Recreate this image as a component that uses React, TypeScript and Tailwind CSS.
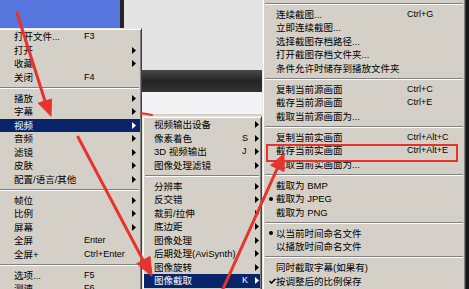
import React from "react"

type Item = {
  label?: string
  hotkey?: string
  sub?: boolean
  active?: boolean
  mark?: "dot" | "check"
  sep?: boolean
}

const mainMenu: Item[] = [
  { label: "打开文件...", hotkey: "F3" },
  { label: "打开", sub: true },
  { label: "收藏", sub: true },
  { label: "关闭", hotkey: "F4" },
  { sep: true },
  { label: "播放", sub: true },
  { label: "字幕", sub: true },
  { label: "视频", sub: true, active: true },
  { label: "音频", sub: true },
  { label: "滤镜", sub: true },
  { label: "皮肤", sub: true },
  { label: "配置/语言/其他", sub: true },
  { sep: true },
  { label: "帧位", sub: true },
  { label: "比例", sub: true },
  { label: "屏幕", sub: true },
  { label: "全屏", hotkey: "Enter" },
  { label: "全屏+", hotkey: "Ctrl+Enter" },
  { sep: true },
  { label: "选项...", hotkey: "F5" },
  { label: "测速", hotkey: "F6" },
]

const videoMenu: Item[] = [
  { label: "视频输出设备", sub: true },
  { label: "像素着色", hotkey: "S", sub: true },
  { label: "3D 视频输出", hotkey: "J", sub: true },
  { label: "图像处理滤镜", sub: true },
  { sep: true },
  { label: "分辨率", sub: true },
  { label: "反交错", sub: true },
  { label: "裁剪/拉伸", sub: true },
  { label: "底边距", sub: true },
  { label: "图像处理", sub: true },
  { label: "后期处理(AviSynth)", sub: true },
  { label: "图像旋转", sub: true },
  { label: "图像截取", hotkey: "K", sub: true, active: true },
]

const captureMenu: Item[] = [
  { sep: true },
  { label: "连续截图...", hotkey: "Ctrl+G" },
  { label: "立即连续截图..." },
  { label: "选择截图存档路径..." },
  { label: "打开截图存档文件夹..." },
  { label: "条件允许时储存到播放文件夹" },
  { sep: true },
  { label: "复制当前源画面", hotkey: "Ctrl+C" },
  { label: "截存当前源画面", hotkey: "Ctrl+E" },
  { label: "截取当前源画面为..." },
  { sep: true },
  { label: "复制当前实画面", hotkey: "Ctrl+Alt+C" },
  { label: "截存当前实画面", hotkey: "Ctrl+Alt+E" },
  { label: "截取当前实画面为..." },
  { sep: true },
  { label: "截取为 BMP" },
  { label: "截取为 JPEG", mark: "dot" },
  { label: "截取为 PNG" },
  { sep: true },
  { label: "以当前时间命名文件", mark: "dot" },
  { label: "以播放时间命名文件" },
  { sep: true },
  { label: "同时截取字幕(如果有)" },
  { label: "按调整后的比例保存", mark: "check" },
]

function Arrow({ white }: { white?: boolean }) {
  return (
    <svg width="4" height="7" viewBox="0 0 4 7" className="shrink-0">
      <path d="M0 0 L4 3.5 L0 7 Z" fill={white ? "#fff" : "#000"} />
    </svg>
  )
}

function Mark({ kind }: { kind?: "dot" | "check" }) {
  if (kind === "dot") return <span className="block w-[4px] h-[4px] rounded-full bg-black" />
  if (kind === "check")
    return (
      <svg width="7" height="6" viewBox="0 0 7 6">
        <path d="M0.5 3 L2.5 5 L6.5 0.8" stroke="#000" strokeWidth="1.5" fill="none" />
      </svg>
    )
  return null
}

function Menu({
  items,
  className,
  padL,
  markW,
  labelW,
  keyW,
}: {
  items: Item[]
  className: string
  padL: string
  markW: string
  labelW: string
  keyW: string
}) {
  return (
    <div
      className={`absolute bg-[#d4d0c8] border border-t-[#e8e6e0] border-l-[#e8e6e0] border-r-[#404040] border-b-[#404040] shadow-[inset_1px_1px_0_#fff,inset_-1px_-1px_0_#808080] p-[1px] ${className}`}
    >
      {items.map((it, i) =>
        it.sep ? (
          <div key={i} className="h-[7.5px] flex items-center px-[1px]">
            <div className="w-full h-[2px] border-t border-t-[#808080] border-b border-b-white" />
          </div>
        ) : (
          <div
            key={i}
            className={`h-[13.5px] flex items-center ${padL} ${
              it.active ? "bg-[#0a246a] text-white" : "text-black"
            }`}
          >
            <span className={`${markW} shrink-0 flex items-center`}>
              <Mark kind={it.mark} />
            </span>
            <span className={`${labelW} shrink-0 whitespace-nowrap`}>{it.label}</span>
            <span className={`${keyW} shrink-0 whitespace-nowrap text-[9px]`}>{it.hotkey}</span>
            {it.sub && <Arrow white={it.active} />}
          </div>
        )
      )}
    </div>
  )
}

export default function App() {
  return (
    <div className="relative w-[469px] h-[289px] overflow-hidden flex bg-[#d4d0c8] text-[9.5px] leading-none font-[family-name:'Liberation_Sans','Noto_Sans_CJK_SC',sans-serif]">
      {/* desktop behind the menus */}
      <div className="w-[120px] flex flex-col">
        <div className="h-[28px] bg-[#5676de]" />
      </div>
      <div className="w-[4px] bg-[#262626]" />
      <div className="w-[138px] flex flex-col">
        <div className="h-[70px] bg-[#e4e4e4]" />
        <div className="h-[22px] bg-gradient-to-b from-[#4a4a4a] via-[#242424] to-[#343434]" />
        <div className="h-[22px] bg-[#f3f3f6]" />
      </div>
      <div className="flex-1 bg-[#141414]" />

      {/* context menus */}
      <Menu
        items={mainMenu}
        className="left-[-3px] top-[28px] w-[145px] h-[300px]"
        padL="pl-[15px]"
        markW="w-0"
        labelW="w-[70px]"
        keyW="w-[48px]"
      />
      <Menu
        items={videoMenu}
        className="left-[142px] top-[116px] w-[120px] h-[200px]"
        padL="pl-[10px]"
        markW="w-0"
        labelW="w-[88px]"
        keyW="w-[13px]"
      />
      <Menu
        items={captureMenu}
        className="left-[262px] top-[-2px] w-[204px] h-[300px]"
        padL="pl-[5px]"
        markW="w-[7px]"
        labelW="w-[131px]"
        keyW="w-[50px]"
      />

      {/* red highlight box */}
      <div className="absolute left-[266px] top-[144px] w-[192px] h-[18px] border-2 border-[#e5322d]" />

      {/* red arrows */}
      <svg className="absolute inset-0 pointer-events-none" width="469" height="289">
        <g fill="#e8332c" stroke="#e8332c" strokeLinecap="round">
          <line x1="17" y1="13" x2="45" y2="101" strokeWidth="3" />
          <polygon points="51,116 51.5,99 38.5,103" />
          <line x1="78" y1="137" x2="143" y2="260" strokeWidth="3" />
          <polygon points="152,276 150,256.5 137,263.5" />
          <line x1="222" y1="291" x2="277" y2="169" strokeWidth="3" />
          <polygon points="284,154 284,171.5 271,165.5" />
          <line x1="141" y1="113" x2="152" y2="115" strokeWidth="2" />
        </g>
      </svg>
    </div>
  )
}
